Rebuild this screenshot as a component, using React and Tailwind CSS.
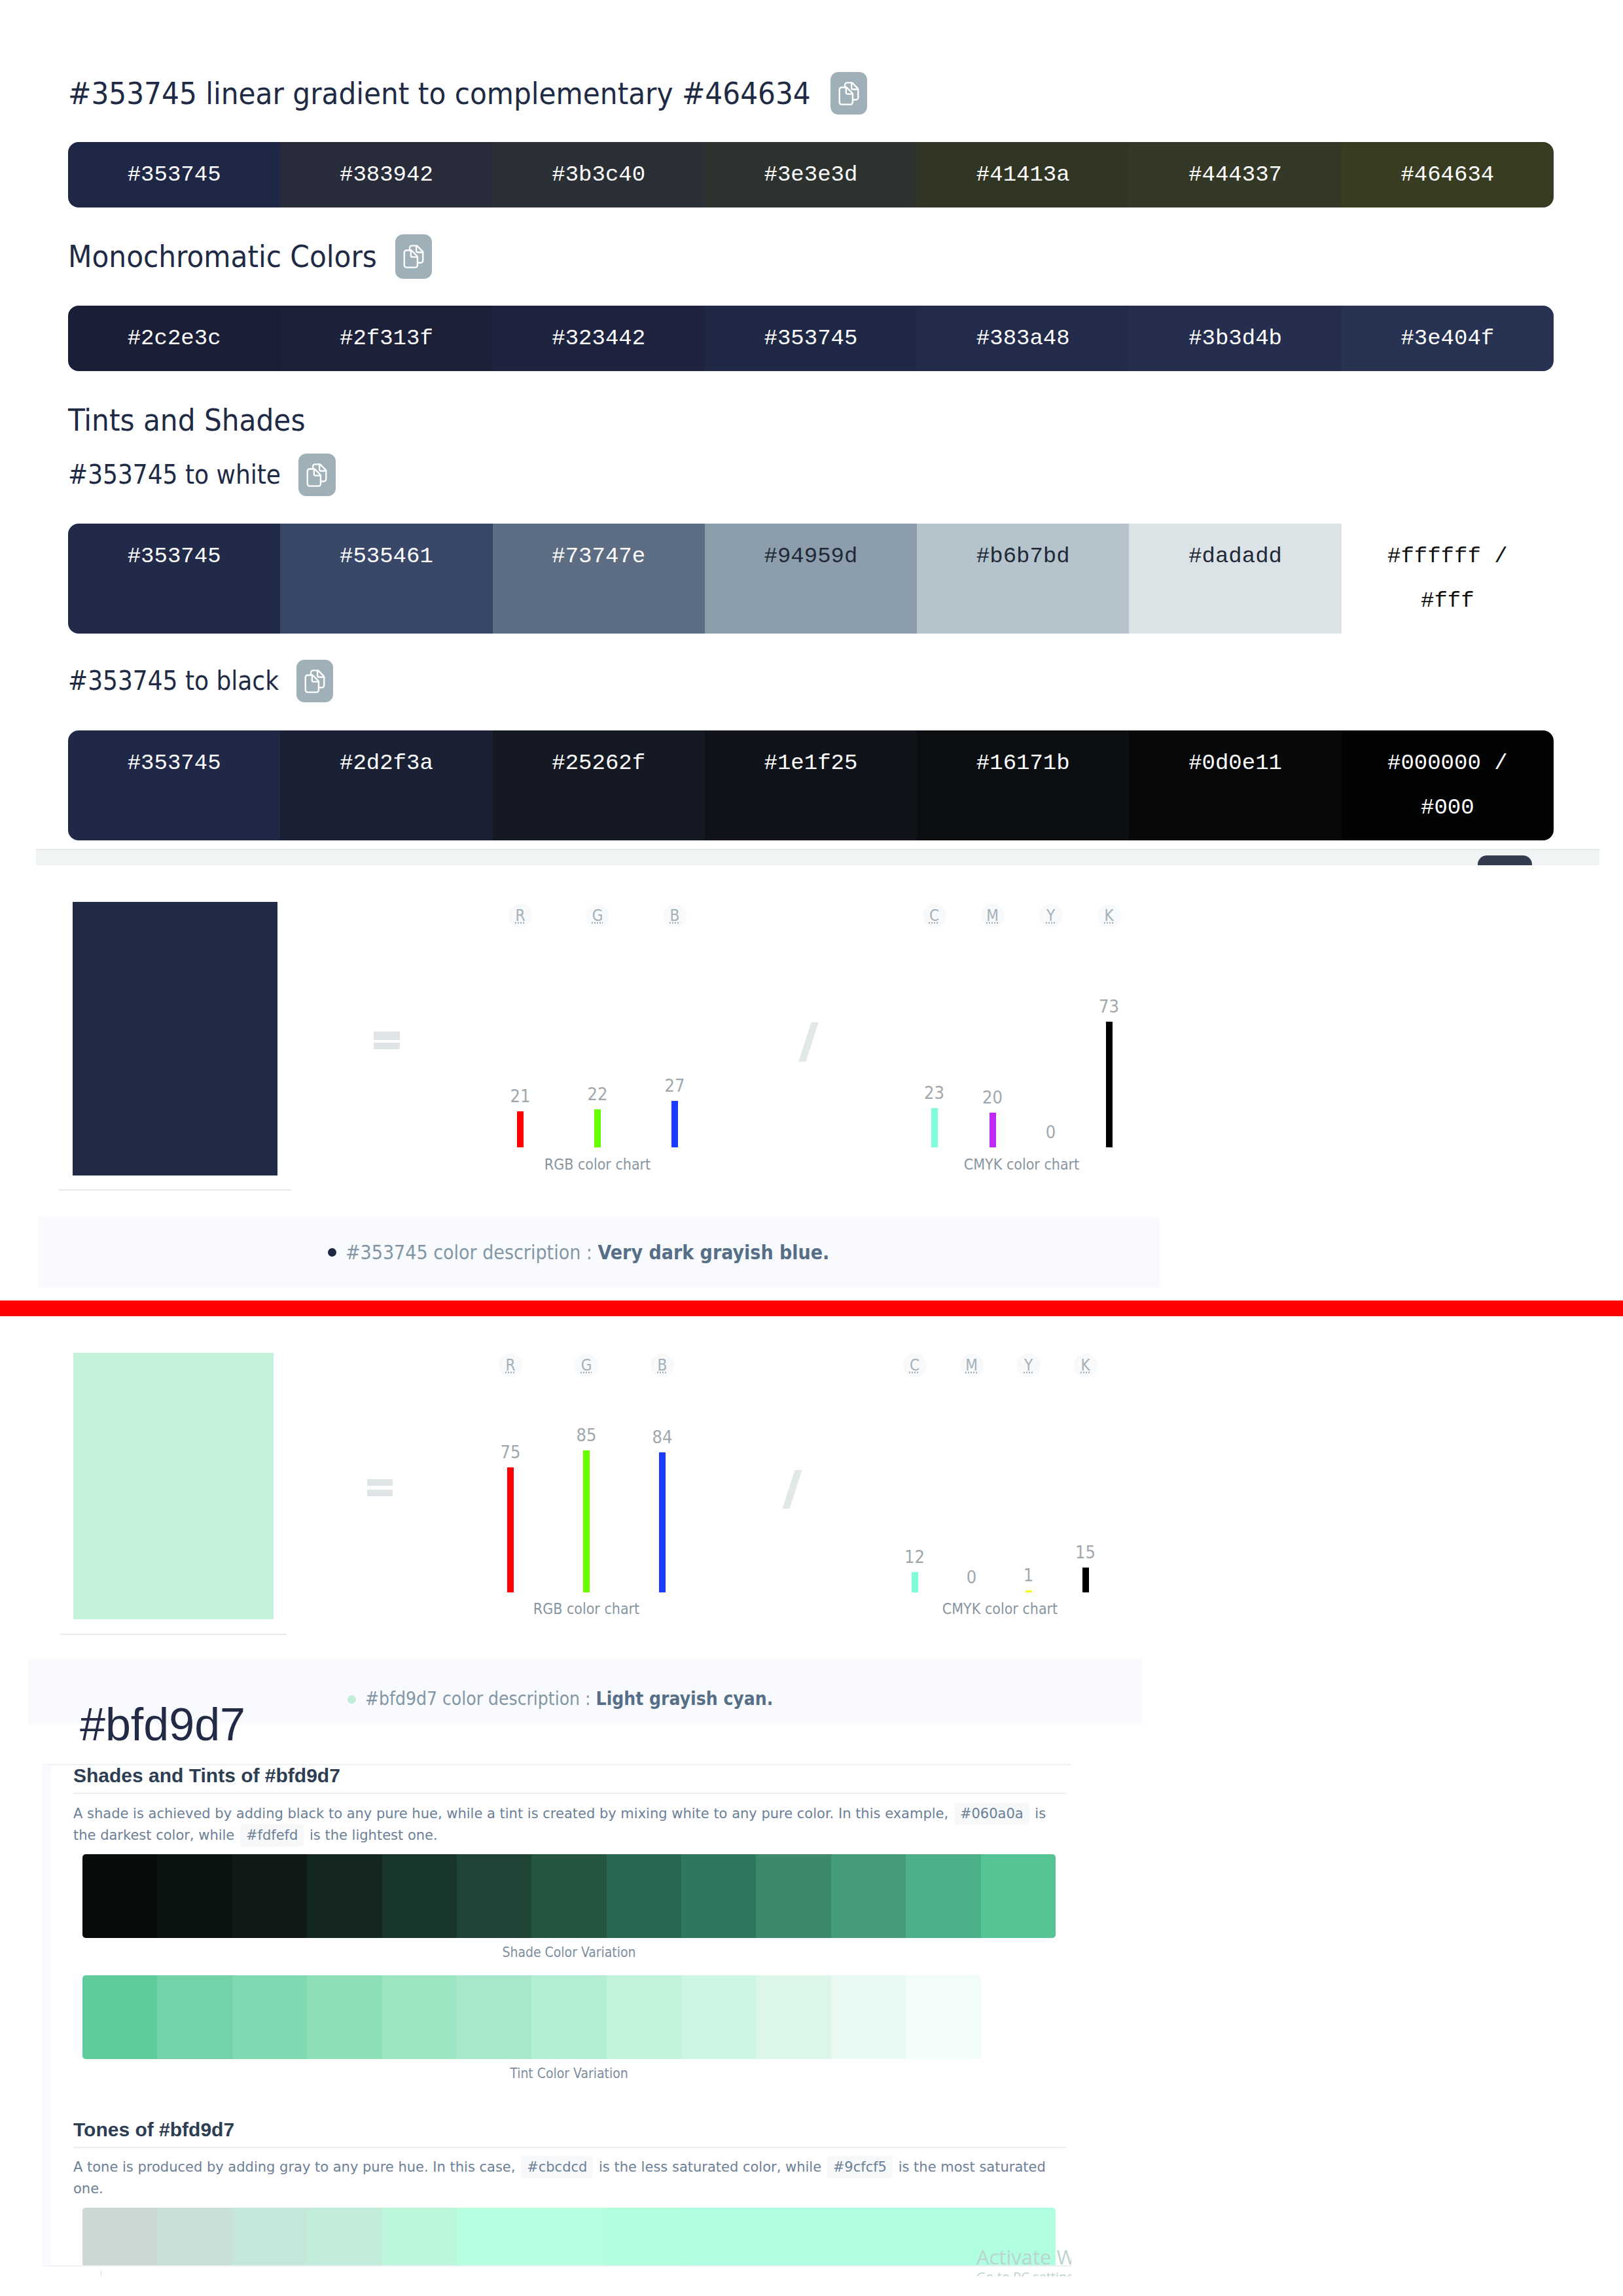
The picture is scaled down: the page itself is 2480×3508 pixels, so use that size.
import { IoDocumentsOutline } from "react-icons/io5";

const condensed = "font-['DejaVu_Sans_Condensed','DejaVu_Sans',sans-serif]";

const gradient = [
    ["#353745", "#1f2747"], ["#383942", "#272b3a"], ["#3b3c40", "#2a3035"], ["#3e3e3d", "#2d322f"],
    ["#41413a", "#313524"], ["#444337", "#343826"], ["#464634", "#383c20"],
];
const mono = [
    ["#2c2e3c", "#1a1e36"], ["#2f313f", "#1c2139"], ["#323442", "#1e243f"], ["#353745", "#1f2845"],
    ["#383a48", "#222b4a"], ["#3b3d4b", "#252e4f"], ["#3e404f", "#283252"],
];
const toWhite = [
    ["#353745", "#212a49", "#ffffff"], ["#535461", "#394768", "#ffffff"], ["#73747e", "#5d6d84", "#ffffff"],
    ["#94959d", "#8c9eab", "#1f2937"], ["#b6b7bd", "#b5c4cc", "#1f2937"], ["#dadadd", "#dce3e6", "#1f2937"],
    ["#ffffff / #fff", "#ffffff", "#111111"],
];
const toBlack = [
    ["#353745", "#1f2847"], ["#2d2f3a", "#1a2135"], ["#25262f", "#141923"], ["#1e1f25", "#10131a"],
    ["#16171b", "#0b0f12"], ["#0d0e11", "#07090b"], ["#000000 / #000", "#020303"],
];

const shades = ["#080c0c", "#0b1312", "#0f1a18", "#132622", "#19362d", "#1e4536", "#245642", "#2a6851", "#2f7760", "#3b8b6a", "#449d78", "#4db089", "#55c493"];
const tints = ["#60cc9b", "#72d3a8", "#80dab1", "#8ddfb5", "#9ce6c2", "#a6e8c9", "#b4eed2", "#c1f2da", "#ccf5e2", "#dcf7ea", "#e8faf2", "#f3fdf8", "#ffffff"];
const tones = ["#cbd8d5", "#c9e0d7", "#c5e7da", "#c0ecd9", "#bcf7dc", "#b7fde0", "#b5fee0", "#b2ffe0", "#b0ffe0", "#b0ffe0", "#b0ffe0", "#afffe0", "#afffe0"];

function CopyButton({ className }) {
    return (
        <div className={"flex items-center justify-center rounded-xl bg-[#9fb0b8] text-white " + className}>
            <IoDocumentsOutline size={38} />
        </div>
    );
}

function HexBar({ cells, className }) {
    return (
        <div className={"flex w-[2270px] overflow-hidden rounded-2xl font-['Liberation_Mono',monospace] text-[34px] leading-[68px] " + className}>
            {cells.map(([label, bg, fg]) => (
                <div key={label} className="flex-1 px-6 py-4 text-center" style={{ backgroundColor: bg, color: fg || "#ffffff" }}>
                    {label}
                </div>
            ))}
        </div>
    );
}

function Chart({ items, scale, className, chartClass, captionClass, title }) {
    return (
        <div className={"flex flex-col " + className}>
            <div className="flex">
                {items.map((it) => (
                    <div key={it.k} className="flex flex-1 justify-center">
                        <abbr className={"flex h-9 w-9 items-center justify-center rounded-full bg-[#f8f9fa] text-[24px] leading-none text-[#a3b0b8] underline decoration-dotted " + condensed}>{it.k}</abbr>
                    </div>
                ))}
            </div>
            <div className={"flex items-end " + chartClass}>
                {items.map((it) => (
                    <div key={it.k} className="flex flex-1 flex-col items-center">
                        <span className={"mb-[9px] text-[27px] leading-[28px] text-[#a0a8ad] " + condensed}>{it.v}</span>
                        <div className="w-[10px]" style={{ height: it.h ?? it.v * scale, backgroundColor: it.c }} />
                    </div>
                ))}
            </div>
            <div className={"text-center text-[23px] leading-[30px] text-[#8795a0] " + condensed + " " + captionClass}>{title}</div>
        </div>
    );
}

function Chip({ children }) {
    return <code className="mx-[2px] rounded bg-[#f6f8f9] px-[9px] py-[5px] font-['DejaVu_Sans',sans-serif]">{children}</code>;
}

function Swatches({ colors, className }) {
    return (
        <div className={"ml-[14px] grid w-[1487px] grid-cols-13 overflow-hidden " + className}>
            {colors.map((c, i) => (
                <div key={i} style={{ backgroundColor: c }} />
            ))}
        </div>
    );
}

function Caption({ children }) {
    return <div className="mt-[7px] ml-[14px] w-[1487px] text-center font-['DejaVu_Sans_Condensed','DejaVu_Sans',sans-serif] text-[21px] leading-[30px] text-[#7c8ea0]">{children}</div>;
}

function PanelHeading({ children, className }) {
    return <h3 className={"h-[44px] w-[1517px] border-b-2 border-[#eceff0] font-['Liberation_Sans',sans-serif] text-[30px] leading-[32px] font-bold text-[#2d3d52] " + className}>{children}</h3>;
}

export default function App() {
    return (
        <div className="relative h-[3508px] w-[2480px] overflow-hidden bg-white text-[#1f2a44]">
            <div className={"pt-[110px] pl-[104px] " + condensed}>
                <div className="flex items-center">
                    <h2 className="text-[47px] leading-[65px]">#353745 linear gradient to complementary #464634</h2>
                    <CopyButton className="ml-[30px] h-[65px] w-[56px]" />
                </div>
                <HexBar cells={gradient} className="mt-[42px]" />

                <div className="mt-[41px] flex items-center">
                    <h2 className="text-[47px] leading-[68px]">Monochromatic Colors</h2>
                    <CopyButton className="ml-[28px] h-[68px] w-[56px]" />
                </div>
                <HexBar cells={mono} className="mt-[41px]" />

                <h2 className="mt-[45px] text-[47px] leading-[60px]">Tints and Shades</h2>
                <div className="mt-[21px] flex items-center">
                    <h3 className="text-[40px] leading-[65px]">#353745 to white</h3>
                    <CopyButton className="ml-[27px] h-[65px] w-[57px]" />
                </div>
                <HexBar cells={toWhite} className="mt-[42px]" />
                <div className="mt-[40px] flex items-center">
                    <h3 className="text-[40px] leading-[65px]">#353745 to black</h3>
                    <CopyButton className="ml-[27px] h-[65px] w-[56px]" />
                </div>
                <HexBar cells={toBlack} className="mt-[43px]" />
            </div>

            <div className="mt-[13px] ml-[55px] flex h-[25px] w-[2389px] items-end justify-end border-t-2 border-[#e6eaeb] bg-[#f1f4f5] pr-[103px]">
                <div className="h-[15px] w-[83px] rounded-t-[14px] bg-[#323c4e]" />
            </div>

            <div className="flex h-[537px] items-start">
                <div className="mt-[56px] ml-[90px] w-[355px]">
                    <div className="ml-[21px] h-[418px] w-[313px] bg-[#212a45]" />
                    <div className="mt-[21px] h-[2px] bg-[#e5eaeb]" />
                </div>
                <div className="mt-[254px] ml-[126px] flex w-[40px] flex-col gap-[4px]">
                    <div className="h-[13px] bg-[#dfe5e6]" />
                    <div className="h-[10px] bg-[#dfe5e6]" />
                </div>
                <Chart
                    title="RGB color chart"
                    scale={2.63}
                    className="mt-[59px] ml-[125px] w-[354px]"
                    chartClass="h-[336px]"
                    captionClass="mt-[11px]"
                    items={[
                        { k: "R", v: 21, c: "#ff0000" },
                        { k: "G", v: 22, c: "#66ff00" },
                        { k: "B", v: 27, c: "#1a3cff" },
                    ]}
                />
                <div className="mt-[240px] ml-[140px] h-[60px] w-[11px] -skew-x-[18deg] bg-[#e2e7e8]" />
                <Chart
                    title="CMYK color chart"
                    scale={2.63}
                    className="mt-[59px] ml-[142px] w-[356px]"
                    chartClass="h-[336px]"
                    captionClass="mt-[11px]"
                    items={[
                        { k: "C", v: 23, c: "#7dfdd8" },
                        { k: "M", v: 20, c: "#bf2bf5" },
                        { k: "Y", v: 0, c: "#ffff00" },
                        { k: "K", v: 73, c: "#000000" },
                    ]}
                />
            </div>

            <div className={"ml-[58px] flex h-[108px] w-[1714px] items-center gap-[14px] bg-[#f8fafd] pl-[443px] text-[30px] text-[#8296a5] " + condensed}>
                <span className="h-[13px] w-[13px] rounded-full bg-[#1f2745]" />
                <p>
                    #353745 color description : <b className="text-[#566f87]">Very dark grayish blue.</b>
                </p>
            </div>

            <div className="mt-[20px] h-[24px] bg-[#ff0000]" />

            <div className="flex h-[524px] items-start">
                <div className="mt-[56px] ml-[92px] w-[346px]">
                    <div className="ml-[20px] h-[407px] w-[306px] bg-[#c2f2da]" />
                    <div className="mt-[22px] h-[2px] bg-[#e5eaeb]" />
                </div>
                <div className="mt-[249px] ml-[123px] flex w-[39px] flex-col gap-[6px]">
                    <div className="h-[10px] bg-[#dfe5e6]" />
                    <div className="h-[10px] bg-[#dfe5e6]" />
                </div>
                <Chart
                    title="RGB color chart"
                    scale={2.55}
                    className="mt-[57px] ml-[122px] w-[348px]"
                    chartClass="h-[329px]"
                    captionClass="mt-[10px]"
                    items={[
                        { k: "R", v: 75, c: "#ff0000" },
                        { k: "G", v: 85, c: "#66ff00" },
                        { k: "B", v: 84, c: "#1a3cff" },
                    ]}
                />
                <div className="mt-[235px] ml-[135px] h-[59px] w-[11px] -skew-x-[18deg] bg-[#e2e7e8]" />
                <Chart
                    title="CMYK color chart"
                    scale={2.55}
                    className="mt-[57px] ml-[138px] w-[348px]"
                    chartClass="h-[329px]"
                    captionClass="mt-[10px]"
                    items={[
                        { k: "C", v: 12, c: "#7dfdd8" },
                        { k: "M", v: 0, c: "#bf2bf5" },
                        { k: "Y", v: 1, c: "#eeff00" },
                        { k: "K", v: 15, c: "#000000" },
                    ]}
                />
            </div>

            <div className={"ml-[43px] flex h-[100px] w-[1703px] items-center gap-[14px] bg-[#f8fafd] pt-[22px] pl-[488px] text-[28px] text-[#8296a5] " + condensed}>
                <span className="h-[13px] w-[13px] rounded-full bg-[#c0ecd8]" />
                <p>
                    #bfd9d7 color description : <b className="text-[#566f87]">Light grayish cyan.</b>
                </p>
            </div>

            <h1 className="relative -mt-[40px] ml-[122px] font-['Liberation_Sans',sans-serif] text-[70px] leading-[80px] text-[#222a45]">#bfd9d7</h1>

            <div className="mt-[20px] ml-[64px] h-[768px] w-[1573px] overflow-hidden border-y-2 border-l-[14px] border-y-[#eef1f2] border-l-[#f8fafd] pl-[34px]">
                <PanelHeading>Shades and Tints of #bfd9d7</PanelHeading>
                <p className="mt-[14px] w-[1517px] font-['DejaVu_Sans',sans-serif] text-[21px] leading-[33px] text-[#6c8098]">
                    A shade is achieved by adding black to any pure hue, while a tint is created by mixing white to any pure color. In this example, <Chip>#060a0a</Chip> is the darkest color, while <Chip>#fdfefd</Chip> is the lightest one.
                </p>
                <Swatches colors={shades} className="mt-[12px] h-[128px] rounded-[5px]" />
                <Caption>Shade Color Variation</Caption>
                <Swatches colors={tints} className="mt-[20px] h-[128px] rounded-[5px]" />
                <Caption>Tint Color Variation</Caption>
                <PanelHeading className="mt-[55px]">Tones of #bfd9d7</PanelHeading>
                <p className="mt-[13px] w-[1517px] font-['DejaVu_Sans',sans-serif] text-[21px] leading-[33px] text-[#6c8098]">
                    A tone is produced by adding gray to any pure hue. In this case, <Chip>#cbcdcd</Chip> is the less saturated color, while <Chip>#9cfcf5</Chip> is the most saturated one.
                </p>
                <Swatches colors={tones} className="mt-[12px] h-[88px] rounded-t-[5px]" />
            </div>

            <div className="mt-[6px] ml-[154px] h-[8px] w-px bg-[#dddddd]" />

            <div className="absolute top-[3430px] left-[1492px] h-[48px] w-[145px] overflow-hidden font-['Open_Sans',sans-serif] whitespace-nowrap text-[#bcd3cf]">
                <div className="text-[31px] leading-[36px]">Activate Windows</div>
                <div className="text-[20px] leading-[26px]">Go to PC settings to activate Windows.</div>
            </div>
        </div>
    );
}
